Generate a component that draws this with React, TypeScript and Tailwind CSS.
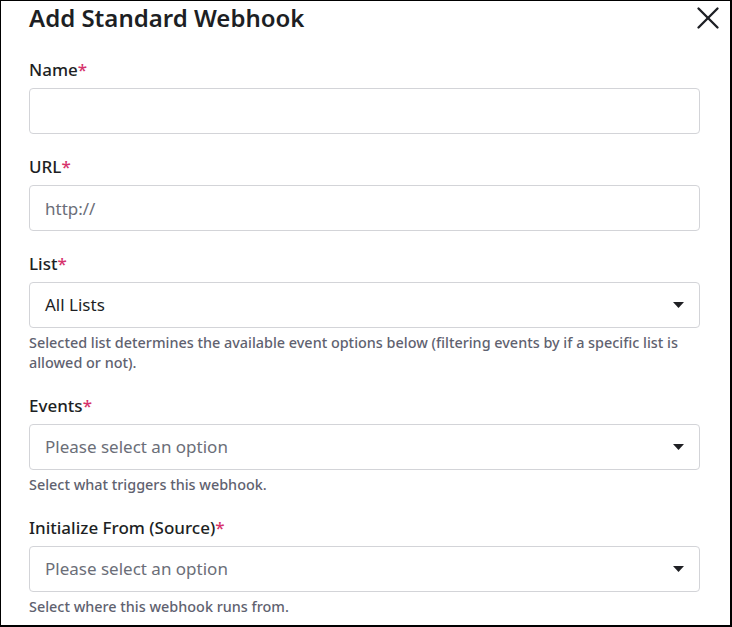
import { X } from "lucide-react";

function Label({ text }: { text: string }) {
  return (
    <label className="mb-[6px] block text-[17px] leading-6 font-medium text-[#1d1f24]">
      {text}
      <span className="text-[#d6336c]">*</span>
    </label>
  );
}

function Caret() {
  return (
    <svg width="11" height="6" viewBox="0 0 11 6" className="shrink-0">
      <path d="M0 0h11L5.5 6z" fill="#1f2024" />
    </svg>
  );
}

function SelectBox({ value, placeholder }: { value?: string; placeholder?: string }) {
  return (
    <div className="flex h-[46px] items-center justify-between rounded border border-[#d3d4d8] bg-white pr-[15px] pl-[15px]">
      <span className={value ? "text-[17px] text-[#1d1f24]" : "text-[17px] text-[#6b6e78]"}>
        {value ?? placeholder}
      </span>
      <Caret />
    </div>
  );
}

function Help({ children }: { children: React.ReactNode }) {
  return <p className="mt-[5px] text-[14.4px] leading-5 font-medium text-[#5f6270]">{children}</p>;
}

export default function App() {
  return (
    <div
      className="h-[627px] w-[732px] border-t border-r-2 border-b-2 border-l border-black bg-white"
      style={{ fontFamily: '"Noto Sans", "Open Sans", sans-serif' }}
    >
      <div className="pt-[1px] pr-[30px] pl-[28px]">
        <div className="flex h-8 items-center justify-between">
          <h1 className="text-[24px] leading-8 font-semibold text-[#1d1f24]">Add Standard Webhook</h1>
          <X size={38} strokeWidth={1.5} className="mr-[-27px] text-[#1d1f24]" />
        </div>

        <div className="mt-[24px] space-y-[21px]">
          <div>
            <Label text="Name" />
            <input className="block h-[46px] w-full rounded border border-[#d3d4d8] px-[15px] text-[17px] outline-none" />
          </div>
          <div>
            <Label text="URL" />
            <input
              placeholder="http://"
              className="block h-[46px] w-full rounded border border-[#d3d4d8] px-[15px] text-[17px] outline-none placeholder:text-[#6b6e78]"
            />
          </div>
          <div>
            <Label text="List" />
            <SelectBox value="All Lists" />
            <Help>
              Selected list determines the available event options below (filtering events by if a specific list is
              allowed or not).
            </Help>
          </div>
          <div>
            <Label text="Events" />
            <SelectBox placeholder="Please select an option" />
            <Help>Select what triggers this webhook.</Help>
          </div>
          <div>
            <Label text="Initialize From (Source)" />
            <SelectBox placeholder="Please select an option" />
            <Help>Select where this webhook runs from.</Help>
          </div>
        </div>
      </div>
    </div>
  );
}
